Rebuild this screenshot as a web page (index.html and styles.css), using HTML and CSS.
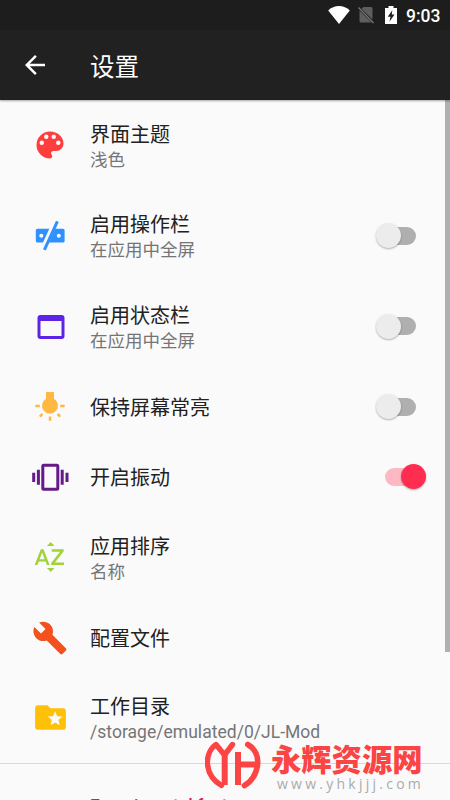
FILE: index.html
```html
<!DOCTYPE html>
<html lang="zh-CN">
<head>
<meta charset="utf-8">
<title>设置</title>
<link rel="stylesheet" href="styles.css">
</head>
<body>
<div class="screen">
  <div class="status">
    <svg class="wifi" viewBox="0 0 22 18"><path d="M11 18 0.2 4.4C3 1.7 7 0 11 0s8 1.700 10.800 4.400z" fill="#fff"/></svg>
    <svg class="sim" viewBox="0 0 16 18"><path d="M5.500 1H13q1.500 0 1.500 1.500V13.500L3.500 2.800zM1.500 4.500 13.500 16.500H3q-1.500 0-1.500-1.500z" fill="#5e5e5e"/><path d="M.5 1.500 15.500 17" stroke="#777" stroke-width="1.300"/></svg>
    <svg class="battery" viewBox="0 0 12 18"><path d="M3.500 0h5v2H12v16H0V2h3.500z" fill="#fff"/><path d="M7.300 4.200 2.700 10.800h2.800l-1 5 5-7.200H6.800z" fill="#202020"/></svg>
    <span class="clock">9:03</span>
  </div>
  <header class="appbar">
    <svg class="back" viewBox="0 0 24 24"><path d="M20 11H7.830l5.590-5.590L12 4l-8 8 8 8 1.410-1.410L7.830 13H20z" fill="#fff"/></svg>
    <h1>设置</h1>
  </header>
  <main class="list">
    <div class="row tall">
      <div class="icon"><svg viewBox="0 0 24 24"><path fill="#ff3d3d" d="M12 3a9 9 0 0 0 0 18c.830 0 1.500-.670 1.500-1.500 0-.390-.150-.740-.390-1.010-.230-.260-.380-.610-.380-.990 0-.830.670-1.500 1.500-1.500H16c2.760 0 5-2.240 5-5 0-4.420-4.030-8-9-8m-5.500 9a1.500 1.500 0 1 1 0-3 1.500 1.500 0 0 1 0 3m3-4a1.500 1.500 0 1 1 0-3 1.500 1.500 0 0 1 0 3m5 0a1.500 1.500 0 1 1 0-3 1.500 1.500 0 0 1 0 3m3 4a1.500 1.500 0 1 1 0-3 1.500 1.500 0 0 1 0 3"/></svg></div>
      <div class="text"><div class="name">界面主题</div><div class="sub">浅色</div></div>
    </div>
    <div class="row tall">
      <div class="icon"><svg viewBox="0 0 36 36"><rect x="3.800" y="10.800" width="28.800" height="13.800" rx="1.700" fill="#2f91ff"/><circle cx="9.300" cy="17.800" r="2" fill="#fafafa"/><circle cx="26.800" cy="17.800" r="2" fill="#fafafa"/><path d="M10.600 32 24.400 2" stroke="#fafafa" stroke-width="5.400"/><path d="M12.400 31.800 25.400 3.400" stroke="#2f91ff" stroke-width="3"/></svg></div>
      <div class="text"><div class="name">启用操作栏</div><div class="sub">在应用中全屏</div></div>
      <div class="switch"><i></i></div>
    </div>
    <div class="row tall">
      <div class="icon"><svg class="window" viewBox="0 0 24 24"><path fill="#5d24e8" d="M19 4H5a2 2 0 0 0-2 2v12a2 2 0 0 0 2 2h14a2 2 0 0 0 2-2V6a2 2 0 0 0-2-2m0 14H5V8h14z"/></svg></div>
      <div class="text"><div class="name">启用状态栏</div><div class="sub">在应用中全屏</div></div>
      <div class="switch"><i></i></div>
    </div>
    <div class="row">
      <div class="icon"><svg viewBox="0 0 36 36"><path d="M14 3h8v6.700a8 8 0 1 1-8 0z" fill="#ffb943"/><path d="M3.300 17h4.500M28.200 17h4.500M18 27.500v4.300M10.400 25 7.800 27.600M25.600 25l2.600 2.600" stroke="#ffb943" stroke-width="2.500"/></svg></div>
      <div class="text"><div class="name">保持屏幕常亮</div></div>
      <div class="switch"><i></i></div>
    </div>
    <div class="row">
      <div class="icon"><svg class="wide" viewBox="0 0 40 36"><rect x="12.800" y="6.300" width="15" height="24" rx="1" fill="none" stroke="#641a87" stroke-width="3"/><path d="M3.700 13.700v9.300M8.400 10.700v15M32.200 10.700v15M37 13.700v9.300" stroke="#641a87" stroke-width="3"/></svg></div>
      <div class="text"><div class="name">开启振动</div></div>
      <div class="switch on"><i></i></div>
    </div>
    <div class="row tall">
      <div class="icon"><svg viewBox="0 0 36 36"><path d="M18.700 3 22.500 6.900h-7.600zM18.700 33l3.800-4h-7.600zM8.800 10.300h2.700L17.600 26h-2.800l-1.200-3.500H6.700L5.400 26H2.700zm1.300 3.200-2.500 6.700h5zM19.700 10.300h12v2L23 23.500h9V26H19.200v-2l8.900-11.200h-8.400z" fill="#a0d33a"/></svg></div>
      <div class="text"><div class="name">应用排序</div><div class="sub">名称</div></div>
    </div>
    <div class="row">
      <div class="icon"><svg class="wrench" viewBox="0 0 24 24"><path fill="#f4511e" d="m22.700 19-9.100-9.100c.9-2.300.4-5-1.500-6.900-2-2-5-2.400-7.400-1.300L9 6 6 9 1.600 4.700C.4 7.100.9 10.100 2.900 12.100c1.900 1.900 4.600 2.400 6.900 1.500l9.100 9.100c.4.4 1 .4 1.400 0l2.300-2.300c.5-.4.5-1.100.1-1.400z"/></svg></div>
      <div class="text"><div class="name">配置文件</div></div>
    </div>
    <div class="row tall">
      <div class="icon"><svg class="folder" viewBox="0 0 24 24"><path fill="#ffc107" d="M20 6h-8l-2-2H4a2 2 0 0 0-2 2v12a2 2 0 0 0 2 2h16a2 2 0 0 0 2-2V8a2 2 0 0 0-2-2m-2.060 11L15 15.280 12.060 17l.780-3.330-2.590-2.240 3.410-.290L15 8l1.340 3.140 3.410.290-2.590 2.240z"/></svg></div>
      <div class="text"><div class="name">工作目录</div><div class="sub path">/storage/emulated/0/JL-Mod</div></div>
    </div>
    <div class="section">Experimental features</div>
  </main>
  <div class="scrollbar"></div>
  <div class="brand">
    <svg viewBox="0 0 56 50"><g fill="none" stroke="#fb4545" stroke-width="6" stroke-linejoin="round"><path d="M16.500 44.500C-1.500 34-1 12 11 3.500L19.500 14 27.500 3.500" stroke-linecap="round" stroke-width="5.400"/><path d="M19.700 13v31M33 11v33M33 23.500H52"/><path d="M42.800 3.500C50.500 8 54 16 52.300 25.500 50.500 35 46.500 40.500 39.500 44.500" stroke-linecap="round" stroke-width="5.600"/></g></svg>
    <div class="brand-text"><div class="brand-name">永辉资源网</div><div class="brand-url">www.yhkjjj.com</div></div>
  </div>
</div>
</body>
</html>
```
FILE: styles.css
```css
* { box-sizing: border-box; }
body { margin: 0; background: #fafafa; font-family: Roboto, "Noto Sans CJK SC", sans-serif; color: #212121; }
.screen { position: relative; width: 450px; height: 800px; overflow: hidden; display: flex; flex-direction: column; }
.status { height: 30px; flex: none; background: #1d1d1d; display: flex; align-items: center; justify-content: flex-end; padding: 0 10px 0 0; color: #fff; }
.wifi { width: 22px; height: 18px; margin-right: 8px; }
.sim { width: 16px; height: 18px; margin-right: 11px; }
.battery { width: 12px; height: 18px; margin-right: 9px; }
.clock { font-size: 17.5px; font-weight: 500; line-height: 30px; width: 34px; white-space: nowrap; padding-top: 1px; }
.appbar { height: 70px; flex: none; background: #212121; color: #fff; display: flex; align-items: center; padding-left: 20px; box-shadow: 0 1px 2px rgba(0,0,0,.35); z-index: 1; }
.back { width: 30px; height: 30px; margin-right: 40px; }
h1 { margin: 0; padding-top: 5px; font-size: 24.5px; font-weight: 400; line-height: 36px; }
.row { height: 70px; display: flex; align-items: center; padding: 0 24px 0 32px; }
.tall { height: 90.6px; }
.icon { width: 58px; height: 36px; flex: none; }
.icon svg { width: 36px; height: 36px; display: block; }
.icon .wide { width: 40px; margin-left: -2px; }
.icon .window { margin: 1px 0 0 .5px; }
.icon .wrench { width: 36px; height: 36px; margin: 1px 0 0 -.5px; }
.icon .folder { width: 37px; height: 37px; margin-top: -1px; }
.text { flex: 1; white-space: nowrap; padding-top: 4px; }
.name { font-size: 20px; line-height: 25px; }
.sub { font-size: 17.5px; line-height: 24px; color: #757575; }
.path { letter-spacing: .03px; }
.switch { width: 52px; height: 26px; display: flex; align-items: center; position: relative; }
.switch::before { content: ""; width: 32px; height: 18px; border-radius: 9px; background: #afafaf; margin-left: 10px; }
.switch i { position: absolute; left: 1.5px; top: .5px; width: 25px; height: 25px; border-radius: 50%; background: #ececec; box-shadow: 0 1px 2px rgba(0,0,0,.3); }
.switch.on::before { background: #fcb9c4; margin-left: 11px; }
.switch.on i { left: 26.5px; top: 0; background: #ff2d50; }
.section { border-top: 1px solid #d8d8d8; padding: 30px 0 0 90px; font-size: 17.5px; font-weight: 500; line-height: 24px; color: #d81b60; white-space: nowrap; }
.scrollbar { position: absolute; right: 0; top: 100px; width: 5px; height: 552px; background: #b0b0b0; }
.brand { position: absolute; left: 204.5px; top: 741px; display: flex; }
.brand svg { width: 56px; height: 50px; }
.brand-text { margin-left: 10.5px; }
.brand-name { font-family: "Noto Sans CJK SC", sans-serif; font-size: 30.3px; font-weight: 900; line-height: 35px; height: 36px; color: #fb4545; white-space: nowrap; }
.brand-url { font-family: "Open Sans", sans-serif; font-size: 14px; line-height: 14px; letter-spacing: 3.25px; color: #aaa; margin-left: 6px; white-space: nowrap; }
```
